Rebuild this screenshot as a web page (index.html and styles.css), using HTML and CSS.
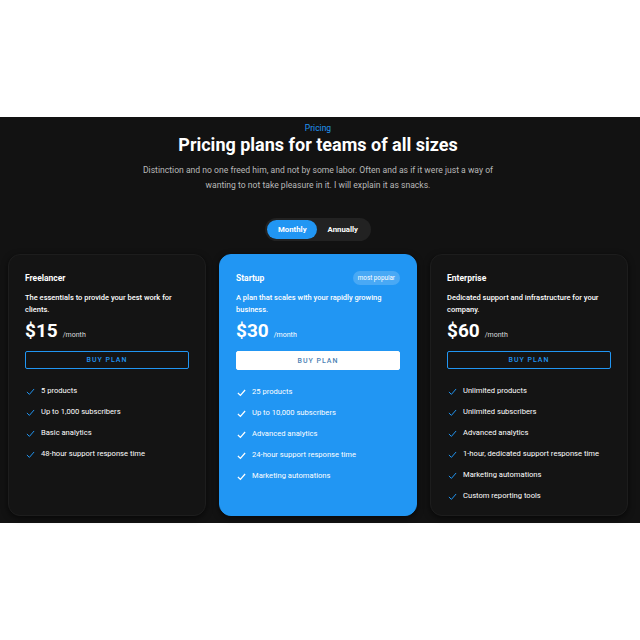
FILE: index.html
```html
<!DOCTYPE html>
<html lang="en">
<head>
<meta charset="utf-8">
<title>Pricing</title>
<link rel="stylesheet" href="styles.css">
</head>
<body>
<section class="pricing">
  <header class="intro">
    <p class="eyebrow">Pricing</p>
    <h1 class="title">Pricing plans for teams of all sizes</h1>
    <p class="lead">Distinction and no one freed him, and not by some labor. Often and as if it were just a way of<br>wanting to not take pleasure in it. I will explain it as snacks.</p>
  </header>
  <div class="toggle">
    <button class="toggle-btn active">Monthly</button>
    <button class="toggle-btn">Annually</button>
  </div>
  <div class="plans">
    <article class="plan">
      <div class="plan-head"><h2 class="plan-name">Freelancer</h2></div>
      <p class="plan-desc">The essentials to provide your best work for clients.</p>
      <p class="price"><span class="amount">$15</span><span class="per">/month</span></p>
      <button class="buy">BUY PLAN</button>
      <ul class="features">
        <li><svg class="check" viewBox="0 0 10 10"><path d="M1 5.5 L3.8 8.2 L9 2.2"/></svg>5 products</li>
        <li><svg class="check" viewBox="0 0 10 10"><path d="M1 5.5 L3.8 8.2 L9 2.2"/></svg>Up to 1,000 subscribers</li>
        <li><svg class="check" viewBox="0 0 10 10"><path d="M1 5.5 L3.8 8.2 L9 2.2"/></svg>Basic analytics</li>
        <li><svg class="check" viewBox="0 0 10 10"><path d="M1 5.5 L3.8 8.2 L9 2.2"/></svg>48-hour support response time</li>
      </ul>
    </article>
    <article class="plan featured">
      <div class="plan-head"><h2 class="plan-name">Startup</h2><span class="badge">most popular</span></div>
      <p class="plan-desc">A plan that scales with your rapidly growing business.</p>
      <p class="price"><span class="amount">$30</span><span class="per">/month</span></p>
      <button class="buy">BUY PLAN</button>
      <ul class="features">
        <li><svg class="check" viewBox="0 0 10 10"><path d="M1 5.5 L3.8 8.2 L9 2.2"/></svg>25 products</li>
        <li><svg class="check" viewBox="0 0 10 10"><path d="M1 5.5 L3.8 8.2 L9 2.2"/></svg>Up to 10,000 subscribers</li>
        <li><svg class="check" viewBox="0 0 10 10"><path d="M1 5.5 L3.8 8.2 L9 2.2"/></svg>Advanced analytics</li>
        <li><svg class="check" viewBox="0 0 10 10"><path d="M1 5.5 L3.8 8.2 L9 2.2"/></svg>24-hour support response time</li>
        <li><svg class="check" viewBox="0 0 10 10"><path d="M1 5.5 L3.8 8.2 L9 2.2"/></svg>Marketing automations</li>
      </ul>
    </article>
    <article class="plan">
      <div class="plan-head"><h2 class="plan-name">Enterprise</h2></div>
      <p class="plan-desc">Dedicated support and infrastructure for your company.</p>
      <p class="price"><span class="amount">$60</span><span class="per">/month</span></p>
      <button class="buy">BUY PLAN</button>
      <ul class="features">
        <li><svg class="check" viewBox="0 0 10 10"><path d="M1 5.5 L3.8 8.2 L9 2.2"/></svg>Unlimited products</li>
        <li><svg class="check" viewBox="0 0 10 10"><path d="M1 5.5 L3.8 8.2 L9 2.2"/></svg>Unlimited subscribers</li>
        <li><svg class="check" viewBox="0 0 10 10"><path d="M1 5.5 L3.8 8.2 L9 2.2"/></svg>Advanced analytics</li>
        <li><svg class="check" viewBox="0 0 10 10"><path d="M1 5.5 L3.8 8.2 L9 2.2"/></svg>1-hour, dedicated support response time</li>
        <li><svg class="check" viewBox="0 0 10 10"><path d="M1 5.5 L3.8 8.2 L9 2.2"/></svg>Marketing automations</li>
        <li><svg class="check" viewBox="0 0 10 10"><path d="M1 5.5 L3.8 8.2 L9 2.2"/></svg>Custom reporting tools</li>
      </ul>
    </article>
  </div>
</section>
</body>
</html>
```
FILE: styles.css
```css
* { box-sizing: border-box; }
html, body { margin: 0; padding: 0; }
body {
  background: #ffffff;
  font-family: Roboto, "Liberation Sans", Arial, sans-serif;
  min-height: 100vh;
  display: flex;
  align-items: center;
}
.pricing {
  width: 100%;
  background: #121212;
  padding: 5px 12px 7px 8px;
  display: flex;
  flex-direction: column;
  align-items: center;
  color: #fff;
}
.intro { text-align: center; }
.eyebrow {
  margin: 0;
  color: #2196f3;
  font-size: 8.5px;
  line-height: 12px;
}
.title {
  margin: 0;
  font-size: 18px;
  line-height: 22px;
  font-weight: 700;
}
.lead {
  margin: 7px 0 0;
  color: #b9b9b9;
  font-size: 8.6px;
  line-height: 15px;
}
.toggle {
  margin-top: 25px;
  background: #222;
  border-radius: 12px;
  padding: 2px;
  display: flex;
  height: 23px;
}
.toggle-btn {
  border: 0;
  background: transparent;
  color: #fff;
  font-family: inherit;
  font-weight: 700;
  font-size: 7.8px;
  padding: 0 10.5px;
  border-radius: 10px;
  height: 19px;
}
.toggle-btn.active { background: #2196f3; }
.plans {
  margin-top: 13px;
  width: 100%;
  display: grid;
  grid-template-columns: repeat(3, 1fr);
  gap: 13px;
}
.plan {
  height: 262px;
  background: #141414;
  border: 1px solid #1d1d1d;
  border-radius: 12px;
  box-shadow: 0 2px 6px rgba(0,0,0,0.6);
  padding: 17px 16px 16px;
  display: flex;
  flex-direction: column;
}
.plan > * { flex-shrink: 0; }
.plan.featured {
  background: #2196f3;
  border-color: #2196f3;
}
.plan-head {
  display: flex;
  align-items: center;
  justify-content: space-between;
  height: 12px;
}
.plan-name {
  margin: 0;
  font-size: 8.5px;
  line-height: 12px;
  font-weight: 700;
}
.badge {
  background: rgba(255,255,255,0.18);
  color: #fff;
  font-size: 6.3px;
  line-height: 14px;
  height: 14px;
  padding: 0 5px;
  border-radius: 7px;
}
.plan-desc {
  margin: 8px 0 0;
  font-size: 7.5px;
  line-height: 12px;
  font-weight: 500;
}
.price {
  margin: 4px 0 0;
  display: flex;
  align-items: baseline;
  gap: 5px;
  height: 22px;
  line-height: 22px;
}
.amount { font-size: 19px; font-weight: 700; line-height: 22px; }
.per { font-size: 7px; color: #ddd; line-height: 10px; }
.featured .per { color: #fff; }
.buy {
  margin-top: 9px;
  height: 18px;
  border: 1px solid #2196f3;
  background: transparent;
  color: #2196f3;
  font-family: inherit;
  font-size: 7px;
  font-weight: 500;
  letter-spacing: 1px;
  border-radius: 2px;
}
.featured .buy {
  background: #fff;
  border-color: #fff;
  color: #4b7fb4;
  height: 19px;
}
.features {
  list-style: none;
  margin: 16px 0 0;
  padding: 0;
  display: flex;
  flex-direction: column;
  gap: 9px;
}
.features li {
  display: flex;
  align-items: center;
  gap: 6px;
  font-size: 7.6px;
  line-height: 12px;
  color: #fff;
}
.check {
  width: 9px;
  height: 9px;
  margin-left: 1px;
  fill: none;
  stroke: #2196f3;
  stroke-width: 1.1;
}
.featured .check { stroke: #fff; stroke-width: 1.4; }
```
